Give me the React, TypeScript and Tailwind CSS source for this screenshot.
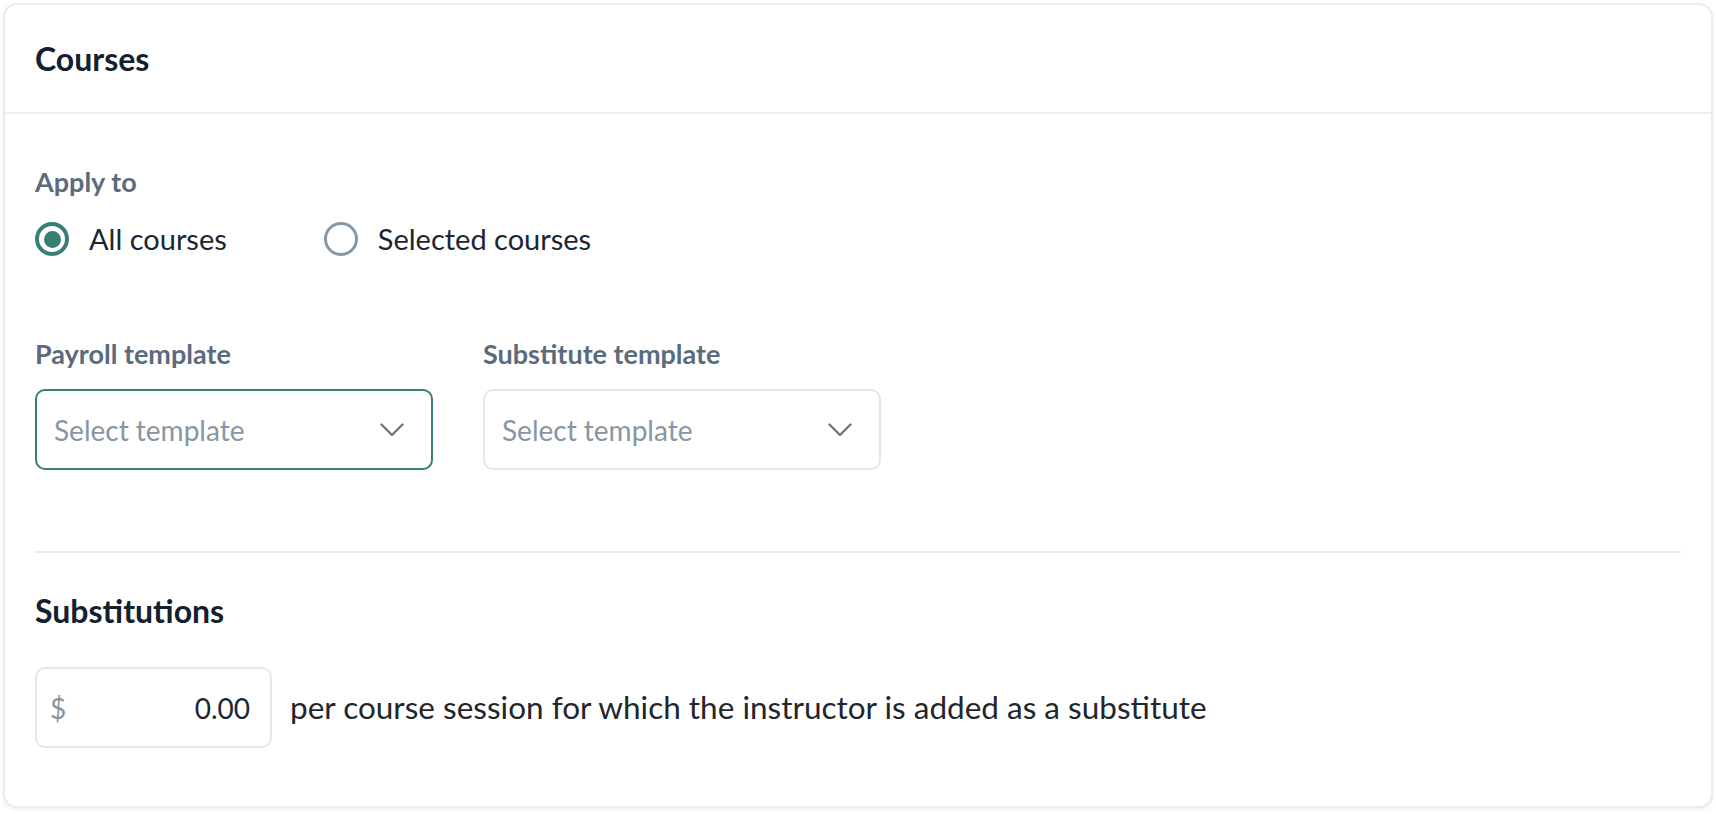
import React, { useState } from 'react';

const font = { fontFamily: 'Lato, "Noto Sans", sans-serif' };

function Chevron() {
  return (
    <svg width="24" height="14" viewBox="0 0 24 14" fill="none" className="text-[#707070]">
      <path d="M1.5 1.5 L12 12 L22.5 1.5" stroke="currentColor" strokeWidth="2.2" strokeLinecap="round" strokeLinejoin="round" />
    </svg>
  );
}

function Radio({ checked, label, onClick }: { checked: boolean; label: string; onClick: () => void }) {
  return (
    <button type="button" onClick={onClick} className="flex h-[34px] items-center gap-[20px]">
      <span
        className={
          checked
            ? 'flex h-[34px] w-[34px] items-center justify-center rounded-full border-[4px] border-[#3a7f77]'
            : 'flex h-[34px] w-[34px] items-center justify-center rounded-full border-[3.5px] border-[#8797a6]'
        }
      >
        {checked && <span className="h-[17px] w-[17px] rounded-full bg-[#3a7f77]" />}
      </span>
      <span className="text-[29px] leading-[34px] text-[#1c2632]">{label}</span>
    </button>
  );
}

function TemplateSelect({ label, focused }: { label: string; focused?: boolean }) {
  return (
    <div className="flex w-[398px] flex-col gap-[19px]">
      <span className="text-[27px] font-bold leading-[32px] text-[#5b6b7b]">{label}</span>
      <div
        className={
          focused
            ? 'flex h-[81px] items-center justify-between rounded-[10px] border-2 border-[#3a7f77] pl-[17px] pr-[27px]'
            : 'flex h-[81px] items-center justify-between rounded-[10px] border-2 border-[#e3e6ea] pl-[17px] pr-[27px]'
        }
      >
        <span className="text-[28px] text-[#8896a3]">Select template</span>
        <Chevron />
      </div>
    </div>
  );
}

export default function App() {
  const [applyTo, setApplyTo] = useState<'all' | 'selected'>('all');

  return (
    <div className="min-h-[814px] bg-white p-[3px]" style={font}>
      <div className="rounded-[14px] border-2 border-[#ebebf0] bg-white shadow-[0_2px_4px_rgba(0,0,0,0.06)]">
        <div className="flex h-[109px] items-center border-b-2 border-[#ebebf0] px-[30px]">
          <h2 className="text-[32px] font-bold text-[#14202e]">Courses</h2>
        </div>

        <div className="px-[30px] pb-[58px] pt-[52px]">
          <div className="text-[27px] font-bold leading-[32px] text-[#5b6b7b]">Apply to</div>
          <div className="mt-[24px] flex items-center gap-[97px]">
            <Radio checked={applyTo === 'all'} label="All courses" onClick={() => setApplyTo('all')} />
            <Radio checked={applyTo === 'selected'} label="Selected courses" onClick={() => setApplyTo('selected')} />
          </div>

          <div className="mt-[82px] flex gap-[50px]">
            <TemplateSelect label="Payroll template" focused />
            <TemplateSelect label="Substitute template" />
          </div>

          <div className="mt-[81px] border-t-2 border-[#ebebf0]" />

          <h3 className="mt-[39px] text-[32px] font-bold leading-[38px] text-[#14202e]">Substitutions</h3>

          <div className="mt-[37px] flex items-center gap-[18px]">
            <div className="flex h-[81px] w-[237px] items-center justify-between rounded-[10px] border-2 border-[#e3e6ea] pl-[13px] pr-[20px]">
              <span className="text-[28px] text-[#8896a3]">$</span>
              <span className="text-[28px] text-[#1c2632]">0.00</span>
            </div>
            <span className="text-[31.5px] text-[#22262b]">
              per course session for which the instructor is added as a substitute
            </span>
          </div>
        </div>
      </div>
    </div>
  );
}
